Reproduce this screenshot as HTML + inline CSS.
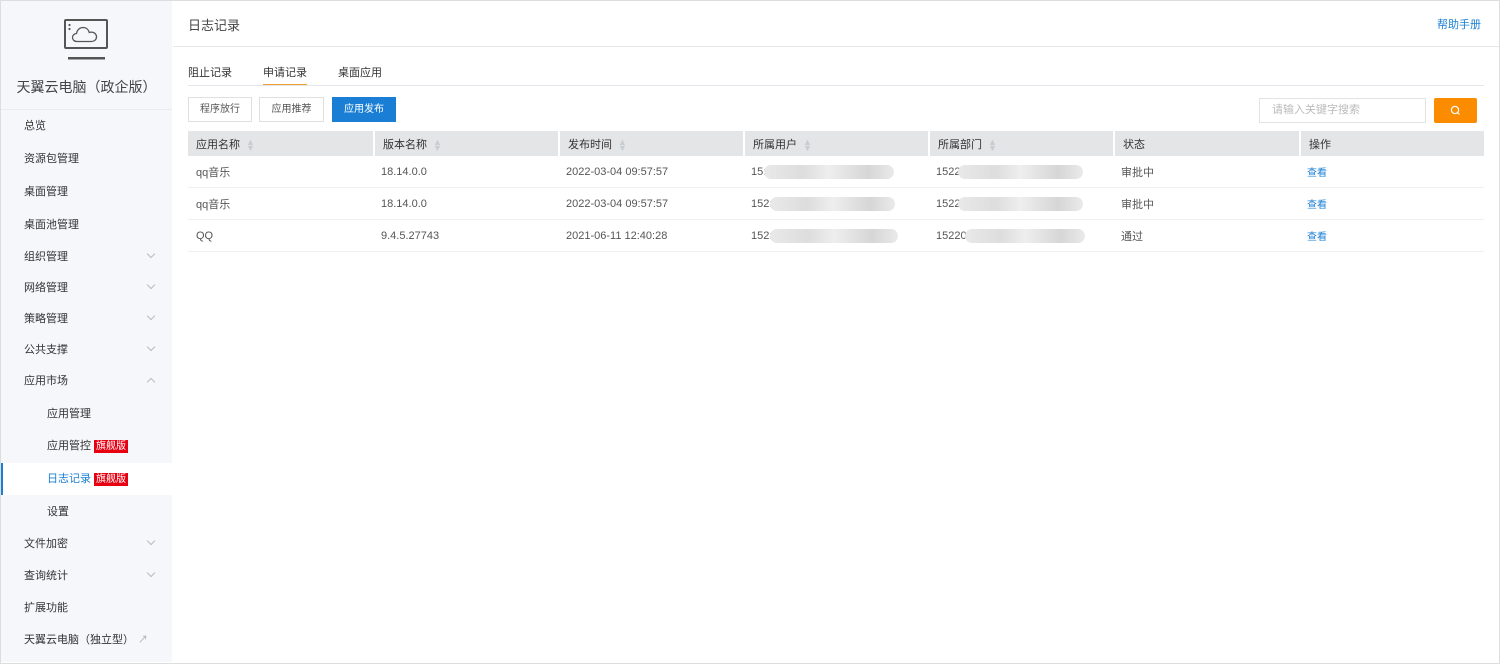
<!DOCTYPE html>
<html><head><meta charset="utf-8"><style>
*{margin:0;padding:0;box-sizing:border-box}
body{width:1500px;height:664px;overflow:hidden;font-family:"Liberation Sans","Noto Sans CJK SC",sans-serif;font-size:11px;color:#333;background:#fff;position:relative}
.frame{position:absolute;left:0;top:0;width:1500px;height:664px;border:1px solid #ddd}
.side{position:absolute;left:1px;top:1px;width:171px;height:661px;background:#f6f7fb}
.logo{position:absolute;left:62px;top:17px}
.brand{position:absolute;left:0;width:171px;top:76px;text-align:center;font-size:14px;color:#444}
.sdiv{position:absolute;left:0;width:171px;top:108px;border-top:1px solid #ebebeb}
.it{position:absolute;left:23px;font-size:11px;color:#333;line-height:16px}
.sub{left:46px}
.chev{position:absolute;left:147px;width:6px;height:6px;border-right:1px solid #bbb;border-bottom:1px solid #bbb;transform:rotate(45deg)}
.up{transform:rotate(-135deg)}
.badge{background:#e60012;color:#fff;font-size:10px;padding:0 2px;margin-left:3px;line-height:13px;display:inline-block}
.active{position:absolute;left:0;top:462px;width:171px;height:32px;background:#fff;border-left:2px solid #1a7fd4}
.hd{position:absolute;left:188px;top:15px;font-size:13px;color:#444}
.help{position:absolute;right:19px;top:16px;color:#1a7fd4;font-size:11px}
.hline{position:absolute;left:173px;right:1px;top:46px;border-top:1px solid #e6e8ec}
.tab{position:absolute;top:64px;font-size:11px;color:#333}
.tline{position:absolute;left:188px;width:1296px;top:85px;border-top:1px solid #e3e6ea}
.btn{position:absolute;top:97px;height:25px;border:1px solid #e0e0e0;font-size:10px;line-height:23px;text-align:center;color:#555;background:#fff}
table{position:absolute;left:188px;top:131px;width:1296px;border-collapse:separate;border-spacing:0}
th{background:#e3e5e6;height:25px;font-weight:normal;text-align:left;padding-left:8px;color:#333;border-left:2px solid #fff;font-size:11px}
th:first-child{border-left:none}
td{height:32px;padding-left:8px;color:#555;border-bottom:1px solid #eef0f3;font-size:11px}
.s{display:inline-block;color:#c8cdd2;font-size:9px;margin-left:6px;vertical-align:middle;line-height:6px}
.blur{display:inline-block;width:130px;height:14px;vertical-align:middle;background:linear-gradient(90deg,#e9e9e9,#ddd 30%,#eee 50%,#d6d6d6 80%,#eaeaea);border-radius:7px;margin-left:-2px}
a{color:#1a7fd4;text-decoration:none;font-size:10px}
</style></head><body>
<div class="side">
<svg class="logo" width="48" height="44" viewBox="0 0 48 44"><rect x="2" y="2" width="42" height="28" rx="1" fill="none" stroke="#555" stroke-width="2"/><rect x="5" y="39" width="37" height="2.5" fill="#555"/><circle cx="6.5" cy="7" r="1.1" fill="#555"/><circle cx="6.5" cy="11" r="1.1" fill="#555"/><path d="M14 23.5c-3 0-4.5-2-4.5-4s1.7-4 4-4c.5-3.5 3.2-6 6.5-6 3.3 0 5.6 2.2 6.3 5 .5-.3 1.2-.4 2-.4 3 0 5.2 2.2 5.2 4.8 0 2.6-2.2 4.6-5 4.6z" fill="none" stroke="#555" stroke-width="1.3"/></svg>
<div class="brand">天翼云电脑（政企版）</div>
<div class="sdiv"></div>
<div class="active"></div>
<div class="it" style="top:117px">总览</div>
<div class="it" style="top:150px">资源包管理</div>
<div class="it" style="top:183px">桌面管理</div>
<div class="it" style="top:216px">桌面池管理</div>
<div class="it" style="top:248px">组织管理</div><div class="chev" style="top:250px"></div>
<div class="it" style="top:279px">网络管理</div><div class="chev" style="top:281px"></div>
<div class="it" style="top:310px">策略管理</div><div class="chev" style="top:312px"></div>
<div class="it" style="top:341px">公共支撑</div><div class="chev" style="top:343px"></div>
<div class="it" style="top:372px">应用市场</div><div class="chev up" style="top:378px"></div>
<div class="it sub" style="top:405px">应用管理</div>
<div class="it sub" style="top:437px">应用管控<span class="badge">旗舰版</span></div>
<div class="it sub" style="top:470px;color:#1a7fd4">日志记录<span class="badge">旗舰版</span></div>
<div class="it sub" style="top:503px">设置</div>
<div class="it" style="top:535px">文件加密</div><div class="chev" style="top:537px"></div>
<div class="it" style="top:567px">查询统计</div><div class="chev" style="top:569px"></div>
<div class="it" style="top:599px">扩展功能</div>
<div class="it" style="top:631px">天翼云电脑（独立型）<span style="color:#aaa;font-size:10px;margin-left:4px">↗</span></div>
</div>
<div class="hd">日志记录</div>
<div class="help">帮助手册</div>
<div class="hline"></div>
<div class="tab" style="left:188px">阻止记录</div>
<div class="tab" style="left:263px">申请记录</div>
<div style="position:absolute;left:263px;top:84px;width:44px;border-top:2px solid #f0a030"></div>
<div class="tab" style="left:338px">桌面应用</div>
<div class="tline"></div>
<div class="btn" style="left:188px;width:64px">程序放行</div>
<div class="btn" style="left:259px;width:65px">应用推荐</div>
<div class="btn" style="left:332px;width:64px;background:#1a7fd4;border-color:#1a7fd4;color:#fff">应用发布</div>
<div style="position:absolute;left:1259px;top:98px;width:167px;height:25px;border:1px solid #e3e3e3;color:#bbb;font-size:11px;line-height:23px;padding-left:12px">请输入关键字搜索</div>
<div style="position:absolute;left:1434px;top:98px;width:43px;height:25px;background:#fb8c00;border-radius:2px"><svg width="43" height="25"><circle cx="21" cy="12" r="3.6" fill="none" stroke="#fff" stroke-width="1.2"/><path d="M23.7 14.7l1.8 1.8" stroke="#fff" stroke-width="1.2"/></svg></div>
<table>
<tr><th style="width:185px">应用名称<span class="s">▲<br>▼</span></th><th style="width:185px">版本名称<span class="s">▲<br>▼</span></th><th style="width:185px">发布时间<span class="s">▲<br>▼</span></th><th style="width:185px">所属用户<span class="s">▲<br>▼</span></th><th style="width:185px">所属部门<span class="s">▲<br>▼</span></th><th style="width:186px">状态</th><th>操作</th></tr>
<tr><td>qq音乐</td><td>18.14.0.0</td><td>2022-03-04 09:57:57</td><td>15:<span class="blur"></span></td><td>1522<span class="blur" style="width:125px"></span></td><td>审批中</td><td><a>查看</a></td></tr>
<tr><td>qq音乐</td><td>18.14.0.0</td><td>2022-03-04 09:57:57</td><td>152:<span class="blur" style="width:125px"></span></td><td>1522<span class="blur" style="width:125px"></span></td><td>审批中</td><td><a>查看</a></td></tr>
<tr><td>QQ</td><td>9.4.5.27743</td><td>2021-06-11 12:40:28</td><td>152:<span class="blur" style="width:128px"></span></td><td>15220<span class="blur" style="width:120px"></span></td><td>通过</td><td><a>查看</a></td></tr>
</table>
<div class="frame"></div>
</body></html>
